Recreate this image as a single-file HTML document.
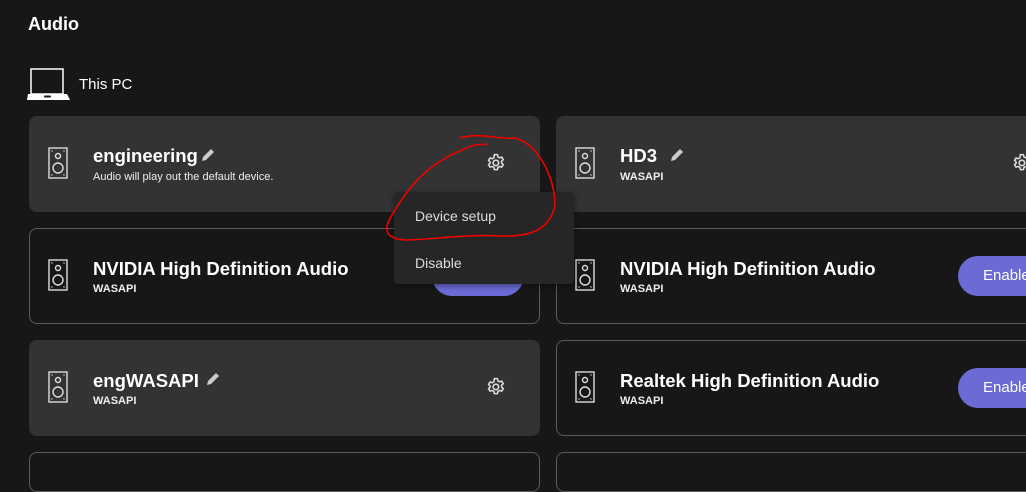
<!DOCTYPE html>
<html><head><style>
*{margin:0;padding:0;box-sizing:border-box}
body{width:1026px;height:467px;background:#171717;overflow:hidden;position:relative;font-family:"Liberation Sans",sans-serif;color:#fff}
.abs{position:absolute}
.card{position:absolute;border-radius:8px}
.fill{background:#333333}
.bord{border:1px solid #5a5a5a;background:#171717}
.t{position:absolute;font-weight:bold;font-size:18.5px}
.s{position:absolute;font-size:11px;font-weight:bold;color:#eee}
.btn{position:absolute;background:#6b6bd6;border-radius:20px;height:40px;color:#fff;font-size:15px;padding:11px 0 0 25px}
</style></head><body>
<div class="abs" style="left:28px;top:14px;font-size:18px;font-weight:bold">Audio</div>
<svg class="abs" style="left:27px;top:68px" width="45" height="33" viewBox="0 0 45 33"><rect x="4" y="1" width="32" height="25" fill="none" stroke="#fff" stroke-width="1.5"/><path d="M1 26 H40 L43 32 H0 Z" fill="#fff"/><rect x="17" y="27.5" width="7" height="2" rx="1" fill="#171717"/></svg>
<div class="abs" style="left:79px;top:76px;font-size:15px">This PC</div>

<svg width="0" height="0" style="position:absolute"><defs>
<g id="spk"><rect x="1" y="1" width="18" height="30" fill="none" stroke="#ddd" stroke-width="1.4"/><circle cx="10" cy="9" r="2.5" fill="none" stroke="#ddd" stroke-width="1.4"/><circle cx="10" cy="21" r="5" fill="none" stroke="#ddd" stroke-width="1.4"/><circle cx="4" cy="4" r=".7" fill="#ddd"/><circle cx="16" cy="4" r=".7" fill="#ddd"/><circle cx="4" cy="28" r=".7" fill="#ddd"/><circle cx="16" cy="28" r=".7" fill="#ddd"/></g>
<g id="gear" transform="scale(1.1)"><circle cx="9" cy="9" r="2.5" fill="none" stroke="#ddd" stroke-width="1.5"/><path d="M7.6 1.5h2.8l.4 2 1.6.9 1.9-.7 1.4 2.4-1.5 1.3v1.8l1.5 1.3-1.4 2.4-1.9-.7-1.6.9-.4 2H7.6l-.4-2-1.6-.9-1.9.7-1.4-2.4 1.5-1.3V8.2L2.3 6.9l1.4-2.4 1.9.7 1.6-.9z" fill="none" stroke="#ddd" stroke-width="1.4" stroke-linejoin="round"/></g>
<g id="pen"><path d="M2 14 L3 10 L11 2 L14 5 L6 13 Z" fill="#ccc"/></g>
</defs></svg>

<div class="card fill" style="left:29px;top:116px;width:511px;height:96px"></div>
<div class="card fill" style="left:556px;top:116px;width:480px;height:96px"></div>
<div class="card bord" style="left:29px;top:228px;width:511px;height:96px"></div>
<div class="card bord" style="left:556px;top:228px;width:480px;height:96px"></div>
<div class="card fill" style="left:29px;top:340px;width:511px;height:96px"></div>
<div class="card bord" style="left:556px;top:340px;width:480px;height:96px"></div>
<div class="card bord" style="left:29px;top:452px;width:511px;height:40px"></div>
<div class="card bord" style="left:556px;top:452px;width:480px;height:40px"></div>

<svg class="abs" style="left:48px;top:147px" width="22" height="34"><use href="#spk"/></svg>
<svg class="abs" style="left:575px;top:147px" width="22" height="34"><use href="#spk"/></svg>
<svg class="abs" style="left:48px;top:259px" width="22" height="34"><use href="#spk"/></svg>
<svg class="abs" style="left:575px;top:259px" width="22" height="34"><use href="#spk"/></svg>
<svg class="abs" style="left:48px;top:371px" width="22" height="34"><use href="#spk"/></svg>
<svg class="abs" style="left:575px;top:371px" width="22" height="34"><use href="#spk"/></svg>

<div class="t" style="left:93px;top:145px">engineering</div>
<svg class="abs" style="left:200px;top:147px" width="16" height="16"><use href="#pen"/></svg>
<div class="s" style="left:93px;top:171px;font-weight:normal">Audio will play out the default device.</div>
<div class="t" style="left:620px;top:145px">HD3</div>
<svg class="abs" style="left:669px;top:147px" width="16" height="16"><use href="#pen"/></svg>
<div class="s" style="left:620px;top:171px">WASAPI</div>

<div class="btn" style="left:432px;top:256px;width:92px"></div>
<div class="t" style="left:93px;top:258px">NVIDIA High Definition Audio</div>
<div class="s" style="left:93px;top:283px">WASAPI</div>
<div class="t" style="left:620px;top:258px">NVIDIA High Definition Audio</div>
<div class="s" style="left:620px;top:283px">WASAPI</div>
<div class="btn" style="left:958px;top:256px;width:100px">Enable</div>

<div class="t" style="left:93px;top:370px">engWASAPI</div>
<svg class="abs" style="left:205px;top:371px" width="16" height="16"><use href="#pen"/></svg>
<div class="s" style="left:93px;top:395px">WASAPI</div>
<div class="t" style="left:620px;top:370px">Realtek High Definition Audio</div>
<div class="s" style="left:620px;top:395px">WASAPI</div>
<div class="btn" style="left:958px;top:368px;width:100px">Enable</div>

<svg class="abs" style="left:486px;top:153px" width="20" height="20"><use href="#gear"/></svg>
<svg class="abs" style="left:1012px;top:153px" width="20" height="20"><use href="#gear"/></svg>
<svg class="abs" style="left:486px;top:377px" width="20" height="20"><use href="#gear"/></svg>

<div class="abs" style="left:394px;top:192px;width:180px;height:92px;background:#262626;border-radius:4px;box-shadow:0 2px 6px rgba(0,0,0,.4)"></div>
<div class="abs" style="left:415px;top:208px;font-size:14px;color:#ddd">Device setup</div>
<div class="abs" style="left:415px;top:255px;font-size:14px;color:#ddd">Disable</div>

<svg class="abs" style="left:0;top:0" width="1026" height="467"><path d="M460 138 C480 132 500 140 515 138 C540 145 555 180 555 205 C550 230 530 237 500 236 C460 234 430 240 405 240 C380 238 385 225 395 210 C410 185 430 160 475 145 L488 144" fill="none" stroke="#e00" stroke-width="1.6"/></svg>
</body></html>
